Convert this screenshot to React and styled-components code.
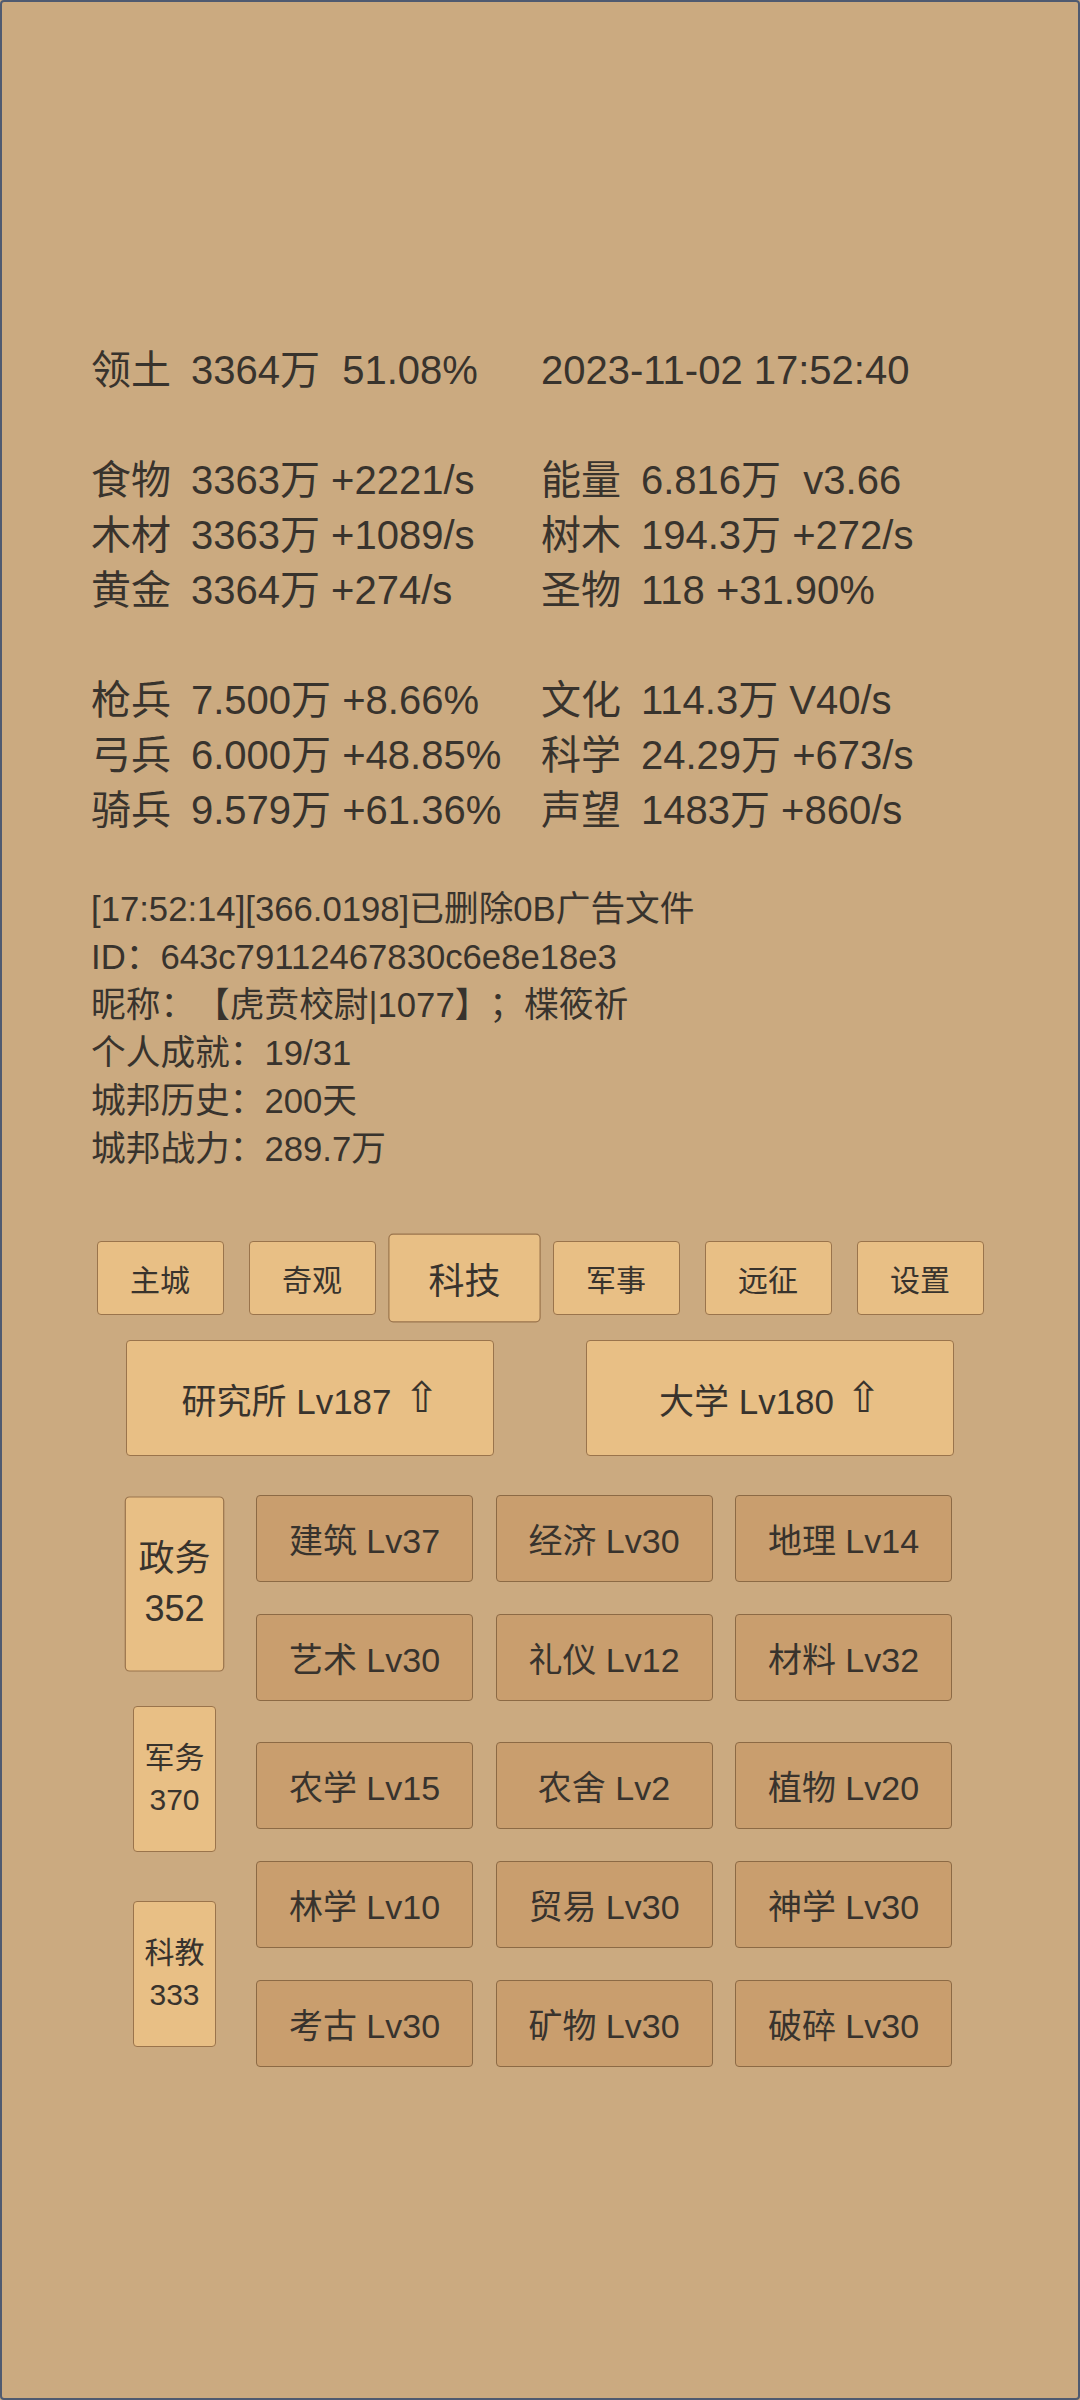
import React from "react";
import styled, { createGlobalStyle } from "styled-components";

const GlobalStyle = createGlobalStyle`
  html, body {
    margin: 0;
    padding: 0;
    background: #cbaa80;
  }
  * {
    box-sizing: border-box;
  }
`;

const Frame = styled.div`
  width: 1080px;
  height: 2400px;
  border: 2px solid #4f5a70;
  border-radius: 4px;
  background-color: #cbaa80;
  color: #38332d;
  font-family: "Liberation Sans", "Noto Sans CJK SC", sans-serif;
  text-spacing-trim: space-all;
  padding-top: 341px;
  overflow: hidden;
`;

const StatsBlock = styled.div`
  padding-left: 89px;
  font-size: 40px;
  line-height: 55px;
`;

const StatGroup = styled.div`
  display: grid;
  grid-template-columns: 450px 1fr;
  margin-top: ${(p) => (p.$first ? "0" : "55px")};
`;

const StatCell = styled.div`
  display: flex;
  white-space: pre;
`;

const StatLabel = styled.span`
  width: 100px;
  flex-shrink: 0;
`;

const InfoBlock = styled.div`
  margin-top: 47px;
  padding-left: 89px;
  font-size: 34.7px;
  line-height: 48px;
  white-space: pre;
`;

const TabRow = styled.div`
  margin-top: 68px;
  display: flex;
  justify-content: center;
`;

const TabButton = styled.button`
  width: 127px;
  height: 74px;
  margin: 0 12.5px;
  padding: 0;
  background-color: #e8bf85;
  border: 1px solid #9a744c;
  border-radius: 4px;
  color: #38332d;
  font-family: "Liberation Sans", "Noto Sans CJK SC", sans-serif;
  font-size: 30px;
  transform: ${(p) => (p.$active ? "scale(1.2)" : "none")};
`;

const BuildingRow = styled.div`
  margin-top: 25px;
  display: flex;
  justify-content: center;
  gap: 92px;
`;

const BuildingButton = styled.button`
  width: 368px;
  height: 116px;
  padding: 0;
  display: flex;
  align-items: center;
  justify-content: center;
  background-color: #e8bf85;
  border: 1px solid #9a744c;
  border-radius: 4px;
  color: #38332d;
  font-family: "Liberation Sans", "Noto Sans CJK SC", sans-serif;
  font-size: 35px;
  white-space: pre;
`;

const UpArrow = styled.span`
  font-family: "DejaVu Sans", sans-serif;
  font-size: 42px;
  font-weight: 300;
  margin-left: 12px;
  line-height: 1;
`;

const Lower = styled.div`
  margin-top: 30px;
  padding-left: 131px;
  display: flex;
  gap: 40px;
`;

const CategoryColumn = styled.div`
  display: flex;
  flex-direction: column;
  width: 83px;
`;

const CategoryButton = styled.div`
  width: 83px;
  height: 146px;
  margin: 24.5px 0;
  display: flex;
  flex-direction: column;
  align-items: center;
  justify-content: center;
  background-color: #e8bf85;
  border: 1px solid #9a744c;
  border-radius: 4px;
  font-size: 30px;
  line-height: 42px;
  text-align: center;
  transform: ${(p) => (p.$active ? "scale(1.2)" : "none")};
`;

const TechArea = styled.div`
  padding-top: 9px;
  display: flex;
  flex-direction: column;
  gap: 41px;
`;

const TechGrid = styled.div`
  display: grid;
  grid-template-columns: repeat(3, 217px);
  grid-auto-rows: 87px;
  column-gap: 22.5px;
  row-gap: 32px;
`;

const TechButton = styled.div`
  display: flex;
  align-items: center;
  justify-content: center;
  background-color: #c99e6e;
  border: 1px solid #8c6a45;
  border-radius: 4px;
  font-size: 34px;
  white-space: pre;
`;

const statGroups = [
  [
    [["领土", "3364万  51.08%"], [null, "2023-11-02 17:52:40"]],
  ],
  [
    [["食物", "3363万 +2221/s"], ["能量", "6.816万  v3.66"]],
    [["木材", "3363万 +1089/s"], ["树木", "194.3万 +272/s"]],
    [["黄金", "3364万 +274/s"], ["圣物", "118 +31.90%"]],
  ],
  [
    [["枪兵", "7.500万 +8.66%"], ["文化", "114.3万 V40/s"]],
    [["弓兵", "6.000万 +48.85%"], ["科学", "24.29万 +673/s"]],
    [["骑兵", "9.579万 +61.36%"], ["声望", "1483万 +860/s"]],
  ],
];

const infoLines = [
  "[17:52:14][366.0198]已删除0B广告文件",
  "ID：643c79112467830c6e8e18e3",
  "昵称：【虎贲校尉|1077】；楪筱祈",
  "个人成就：19/31",
  "城邦历史：200天",
  "城邦战力：289.7万",
];

const tabs = ["主城", "奇观", "科技", "军事", "远征", "设置"];

const categories = [
  { name: "政务", value: 352, active: true },
  { name: "军务", value: 370 },
  { name: "科教", value: 333 },
];

const techGroups = [
  ["建筑 Lv37", "经济 Lv30", "地理 Lv14", "艺术 Lv30", "礼仪 Lv12", "材料 Lv32"],
  [
    "农学 Lv15",
    "农舍 Lv2",
    "植物 Lv20",
    "林学 Lv10",
    "贸易 Lv30",
    "神学 Lv30",
    "考古 Lv30",
    "矿物 Lv30",
    "破碎 Lv30",
  ],
];

const App = () => {
  return (
    <>
      <GlobalStyle />
      <Frame>
        <StatsBlock>
          {statGroups.map((group, gi) => (
            <StatGroup key={gi} $first={gi === 0}>
              {group.map((row) =>
                row.map(([label, value], ci) => (
                  <StatCell key={`${label}-${ci}-${value}`}>
                    {label && <StatLabel>{label}</StatLabel>}
                    {value}
                  </StatCell>
                ))
              )}
            </StatGroup>
          ))}
        </StatsBlock>

        <InfoBlock>
          {infoLines.map((line) => (
            <div key={line}>{line}</div>
          ))}
        </InfoBlock>

        <TabRow>
          {tabs.map((tab) => (
            <TabButton key={tab} $active={tab === "科技"}>
              {tab}
            </TabButton>
          ))}
        </TabRow>

        <BuildingRow>
          <BuildingButton>
            研究所 Lv187<UpArrow>⇧</UpArrow>
          </BuildingButton>
          <BuildingButton>
            大学 Lv180<UpArrow>⇧</UpArrow>
          </BuildingButton>
        </BuildingRow>

        <Lower>
          <CategoryColumn>
            {categories.map((c) => (
              <CategoryButton key={c.name} $active={c.active}>
                <div>{c.name}</div>
                <div>{c.value}</div>
              </CategoryButton>
            ))}
          </CategoryColumn>
          <TechArea>
            {techGroups.map((group, gi) => (
              <TechGrid key={gi}>
                {group.map((t) => (
                  <TechButton key={t}>{t}</TechButton>
                ))}
              </TechGrid>
            ))}
          </TechArea>
        </Lower>
      </Frame>
    </>
  );
};

export default App;
